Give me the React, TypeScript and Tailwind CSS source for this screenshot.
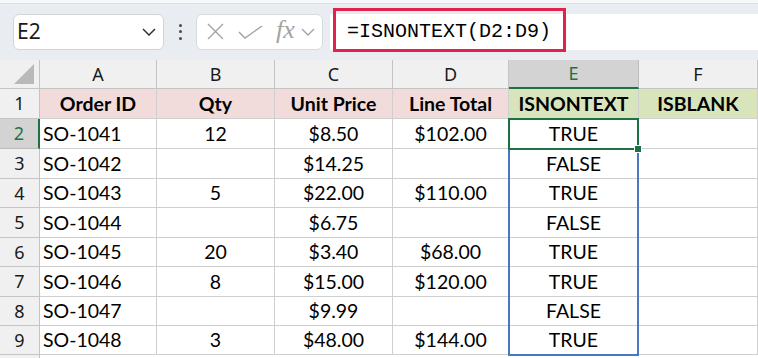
import { ReactNode } from 'react'

const cols = ['A', 'B', 'C', 'D', 'E', 'F']
const colW = ['w-[117px]', 'w-[118px]', 'w-[118px]', 'w-[116px]', 'w-[130px]', 'w-[119px]']
const rowH = ['h-[30px]', 'h-[30px]', 'h-[30px]', 'h-[29px]', 'h-[30px]', 'h-[29px]', 'h-[30px]', 'h-[29px]', 'h-[29px]']

const headers = ['Order ID', 'Qty', 'Unit Price', 'Line Total', 'ISNONTEXT', 'ISBLANK']

const rows: string[][] = [
  ['SO-1041', '12', '$8.50', '$102.00', 'TRUE', ''],
  ['SO-1042', '', '$14.25', '', 'FALSE', ''],
  ['SO-1043', '5', '$22.00', '$110.00', 'TRUE', ''],
  ['SO-1044', '', '$6.75', '', 'FALSE', ''],
  ['SO-1045', '20', '$3.40', '$68.00', 'TRUE', ''],
  ['SO-1046', '8', '$15.00', '$120.00', 'TRUE', ''],
  ['SO-1047', '', '$9.99', '', 'FALSE', ''],
  ['SO-1048', '3', '$48.00', '$144.00', 'TRUE', ''],
]

const cellFont = { fontFamily: 'Lato, "Noto Sans", sans-serif' }
const uiFont = { fontFamily: '"Noto Sans", "Open Sans", sans-serif' }

function Cell({ w, h, className = '', children }: { w: string; h: string; className?: string; children?: ReactNode }) {
  return (
    <div className={`${w} ${h} shrink-0 flex items-center border-r border-b border-[#cfcfcf] text-[19.5px] leading-none text-black ${className}`} style={cellFont}>
      {children}
    </div>
  )
}

function Toolbar() {
  return (
    <div className="h-[60px] bg-[#e9edf1] border-t-[3px] border-[#f7f8f9] flex items-center relative">
      <div className="absolute top-0 left-0 right-0 h-px bg-[#dde1e5]" />
      {/* name box */}
      <div className="ml-[13px] w-[151px] h-[36px] bg-white border border-[#d2d5d8] rounded-[6px] flex items-center pl-[3px] pr-[7px] justify-between">
        <span className="text-[21px] text-[#1a1a1a]" style={uiFont}>E2</span>
        <svg width="14" height="8" viewBox="0 0 14 8" fill="none" stroke="#333" strokeWidth="1.5">
          <path d="M1 1l6 6 6-6" />
        </svg>
      </div>
      {/* dots */}
      <div className="w-[32px] flex flex-col items-center gap-[3.5px]">
        <span className="w-[3px] h-[3px] rounded-full bg-[#4a4a4a]" />
        <span className="w-[3px] h-[3px] rounded-full bg-[#4a4a4a]" />
        <span className="w-[3px] h-[3px] rounded-full bg-[#4a4a4a]" />
      </div>
      {/* formula buttons */}
      <div className="w-[127px] h-[36px] bg-white border border-[#d8dbde] rounded-[6px] flex items-center pl-[10px]">
        <svg width="17" height="17" viewBox="0 0 17 17" fill="none" stroke="#a3a3a3" strokeWidth="1.4">
          <path d="M1 1l15 15M16 1L1 16" />
        </svg>
        <svg className="ml-[14px]" width="25" height="14" viewBox="0 0 25 14" fill="none" stroke="#a3a3a3" strokeWidth="1.4">
          <path d="M1 7l6 6L24 1" />
        </svg>
        <span className="ml-[13px] text-[26px] italic text-[#a3a3a3] leading-none -mt-[3px]" style={{ fontFamily: '"Liberation Serif", serif' }}>fx</span>
        <svg className="ml-[6px]" width="14" height="8" viewBox="0 0 14 8" fill="none" stroke="#a3a3a3" strokeWidth="1.4">
          <path d="M1 1l6 6 6-6" />
        </svg>
      </div>
      {/* formula bar */}
      <div className="ml-[7px] flex-1 h-[36px] bg-white relative flex items-center">
        <div className="absolute left-[3px] top-[-6px] w-[233px] h-[44px] border-[3px] border-[#e0224c]" />
        <span className="pl-[17px] text-[20px] text-black" style={{ fontFamily: '"Liberation Mono", monospace' }}>
          =ISNONTEXT(D2:D9)
        </span>
      </div>
    </div>
  )
}

export default function App() {
  return (
    <div className="w-[758px] h-[358px] overflow-hidden bg-white">
      <Toolbar />
      <div className="relative">
        {/* column header */}
        <div className="flex">
          <div className="w-[40px] h-[29px] shrink-0 bg-[#f0f0f0] border-r border-b border-[#c4c4c4] flex items-end justify-end pr-[5px] pb-[4px]">
            <svg width="20" height="20" viewBox="0 0 20 20">
              <path d="M20 0V20H0Z" fill="#b9b9b9" />
            </svg>
          </div>
          {cols.map((c, i) => (
            <div
              key={c}
              className={`${colW[i]} h-[29px] shrink-0 flex items-center justify-center border-r text-[18px] ${
                c === 'E'
                  ? 'bg-[#d3d3d3] border-b-2 border-b-[#1e7145] border-r-[#bdbdbd] text-[#1e7145]'
                  : 'bg-[#f0f0f0] border-b border-[#c4c4c4] text-[#1a1a1a]'
              }`}
              style={uiFont}
            >
              {c}
            </div>
          ))}
        </div>
        {/* row 1 */}
        <div className="flex">
          <div className={`w-[40px] ${rowH[0]} shrink-0 bg-[#f0f0f0] border-r border-b border-[#c4c4c4] flex items-center justify-center text-[18px] text-[#1a1a1a]`} style={uiFont}>
            1
          </div>
          {headers.map((h, i) => (
            <Cell key={h} w={colW[i]} h={rowH[0]} className={`justify-center font-bold ${i < 4 ? 'bg-[#f2dcdb]' : 'bg-[#d8e4bc]'}`}>
              {h}
            </Cell>
          ))}
        </div>
        {rows.map((r, ri) => (
          <div key={ri} className="flex">
            <div
              className={`w-[40px] ${rowH[ri + 1]} shrink-0 border-b flex items-center justify-center text-[18px] ${
                ri === 0
                  ? 'bg-[#d3d3d3] border-r-2 border-r-[#1e7145] border-b-[#bdbdbd] text-[#1e7145]'
                  : 'bg-[#f0f0f0] border-r border-[#c4c4c4] text-[#1a1a1a]'
              }`}
              style={uiFont}
            >
              {ri + 2}
            </div>
            {r.map((v, ci) => (
              <Cell key={ci} w={colW[ci]} h={rowH[ri + 1]} className={ci === 0 ? 'pl-[3px]' : 'justify-center'}>
                {v}
              </Cell>
            ))}
          </div>
        ))}
        <div className="flex">
          <div className="w-[40px] h-[10px] shrink-0 bg-[#f0f0f0] border-r border-[#c4c4c4]" />
        </div>
        {/* selected range E2:E9 */}
        <div className="absolute left-[508px] top-[88px] w-[131px] h-[208px] border-2 border-[#4a78c0] pointer-events-none" />
        {/* active cell E2 */}
        <div className="absolute left-[508px] top-[58px] w-[131px] h-[32px] border-2 border-[#1e7145] pointer-events-none" />
        <div className="absolute left-[634px] top-[85px] w-[8px] h-[8px] bg-[#1e7145] border border-white" />
      </div>
    </div>
  )
}
